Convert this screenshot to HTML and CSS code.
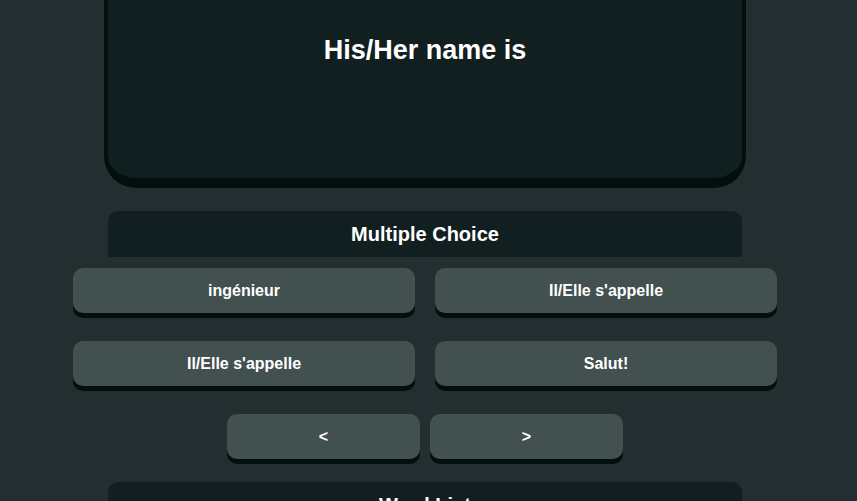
FILE: index.html
```html
<!DOCTYPE html>
<html lang="en">
<head>
<meta charset="utf-8">
<title>Flashcards</title>
<link rel="stylesheet" href="styles.css">
</head>
<body>
<main class="page">
  <section class="card">
    <h1 class="card-text">His/Her name is</h1>
  </section>
  <h2 class="panel-head">Multiple Choice</h2>
  <div class="choices">
    <button class="btn">ingénieur</button>
    <button class="btn">Il/Elle s'appelle</button>
    <button class="btn">Il/Elle s'appelle</button>
    <button class="btn">Salut!</button>
  </div>
  <div class="nav">
    <button class="btn nav-btn">&lt;</button>
    <button class="btn nav-btn">&gt;</button>
  </div>
  <h2 class="panel-head">Word List</h2>
</main>
</body>
</html>
```
FILE: styles.css
```css
html, body {
  margin: 0;
  padding: 0;
  background: #222e2f;
  height: 100%;
  overflow: hidden;
}
body {
  font-family: "Liberation Sans", Arial, sans-serif;
  color: #ffffff;
}
.page {
  width: 850px;
  display: flex;
  flex-direction: column;
  align-items: center;
}
.card {
  box-sizing: border-box;
  width: 642px;
  height: 228px;
  margin-top: -40px;
  background: #121f20;
  border: 4px solid #020f0f;
  border-bottom-width: 10px;
  border-radius: 0 0 32px 32px;
}
.card-text {
  margin: 0;
  padding-top: 70px;
  font-size: 27px;
  line-height: 32px;
  font-weight: 700;
  text-align: center;
}
.panel-head {
  box-sizing: border-box;
  width: 634px;
  height: 46px;
  margin: 23px 0 0;
  background: #121f20;
  border-radius: 10px 10px 0 0;
  font-size: 20px;
  line-height: 46px;
  font-weight: 700;
  text-align: center;
}
.choices {
  width: 704px;
  margin-top: 11px;
  display: grid;
  grid-template-columns: 342px 342px;
  column-gap: 20px;
  row-gap: 28px;
}
.btn {
  height: 45px;
  padding: 0;
  border: 0;
  border-radius: 10px;
  background: #425050;
  box-shadow: 0 5px 0 #020f0f;
  color: #ffffff;
  font-family: "Liberation Sans", Arial, sans-serif;
  font-size: 16px;
  font-weight: 700;
  line-height: 45px;
  text-align: center;
}
.nav {
  margin-top: 28px;
  display: flex;
  gap: 10px;
}
.nav-btn {
  width: 193px;
}
```
